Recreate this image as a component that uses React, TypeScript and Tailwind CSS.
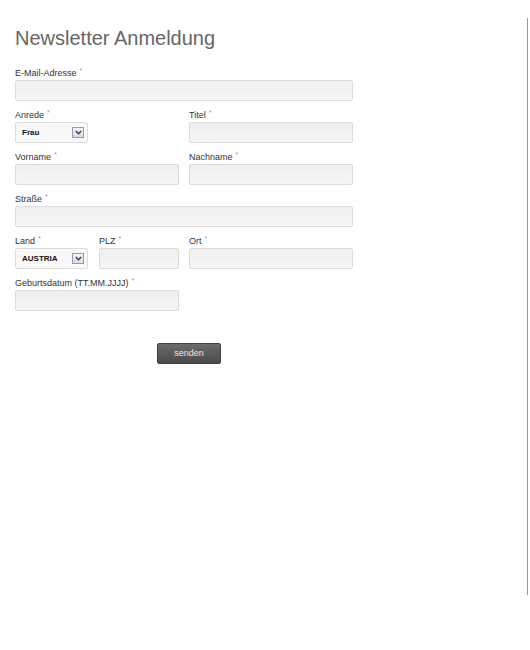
import type { ReactNode } from "react";

const Label = ({ children }: { children: ReactNode }) => (
  <div className="h-[14px] text-[9px] leading-[14px] text-[#333] whitespace-nowrap">
    {children}
    <span className="ml-[3px] relative -top-[3px] text-[7px] leading-none text-[#999]">*</span>
  </div>
);

const Input = ({ w }: { w: string }) => (
  <div
    className={`${w} h-[21px] rounded-[2px] border border-[#dcdcdc] bg-gradient-to-b from-[#efefef] to-[#f6f6f6]`}
  />
);

const Select = ({ value }: { value: string }) => (
  <div className="w-[73px] h-[21px] rounded-[2px] border border-[#dcdcdc] bg-[#f8f8f8] flex items-center justify-between pl-[6px] pr-[3px]">
    <span className="text-[8px] font-bold text-[#111]">{value}</span>
    <span className="w-[12px] h-[11px] border border-[#9b9bab] bg-gradient-to-b from-[#f4f4f8] to-[#dcdce4] flex items-center justify-center">
      <svg width="7" height="5" viewBox="0 0 7 5">
        <path d="M0.8 1 L3.5 3.8 L6.2 1" fill="none" stroke="#3a3a4a" strokeWidth="1.4" />
      </svg>
    </span>
  </div>
);

const Field = ({ label, children }: { label: string; children: ReactNode }) => (
  <div className="flex flex-col">
    <Label>{label}</Label>
    {children}
  </div>
);

export default function App() {
  return (
    <div className="bg-white min-h-[650px] pt-[18px] font-['Liberation_Sans',Arial,sans-serif]">
      <div className="w-[528px] h-[577px] border-r border-[#9a9a9a] pl-[15px] pt-[8px]">
        {/* Header */}
        <h1 className="text-[20px] leading-[24px] text-[#666] font-normal mb-[16px]">
          Newsletter Anmeldung
        </h1>

        {/* Form */}
        <div className="flex flex-col gap-[7px] w-[338px]">
          <Field label="E-Mail-Adresse">
            <Input w="w-[338px]" />
          </Field>

          <div className="flex gap-[10px]">
            <div className="w-[164px]">
              <Field label="Anrede">
                <Select value="Frau" />
              </Field>
            </div>
            <Field label="Titel">
              <Input w="w-[164px]" />
            </Field>
          </div>

          <div className="flex gap-[10px]">
            <Field label="Vorname">
              <Input w="w-[164px]" />
            </Field>
            <Field label="Nachname">
              <Input w="w-[164px]" />
            </Field>
          </div>

          <Field label="Straße">
            <Input w="w-[338px]" />
          </Field>

          <div className="flex">
            <div className="w-[84px]">
              <Field label="Land">
                <Select value="AUSTRIA" />
              </Field>
            </div>
            <div className="w-[90px]">
              <Field label="PLZ">
                <Input w="w-[80px]" />
              </Field>
            </div>
            <Field label="Ort">
              <Input w="w-[164px]" />
            </Field>
          </div>

          <Field label="Geburtsdatum (TT.MM.JJJJ)">
            <Input w="w-[164px]" />
          </Field>
        </div>

        {/* Submit */}
        <button className="mt-[32px] ml-[142px] w-[64px] h-[21px] rounded-[2px] border border-[#3f3f3f] bg-gradient-to-b from-[#6c6c6c] to-[#4a4a4a] text-[9px] text-[#e6e6e6]">
          senden
        </button>
      </div>
    </div>
  );
}
